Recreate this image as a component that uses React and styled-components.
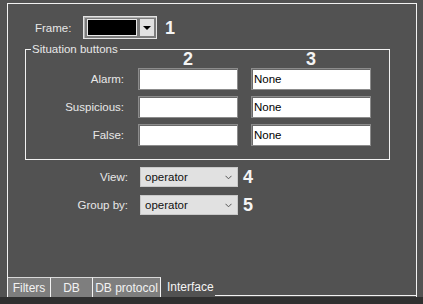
import React from "react";
import styled, { createGlobalStyle } from "styled-components";

const Global = createGlobalStyle`
  html, body { margin: 0; padding: 0; background: #525252; }
  body { font-family: "Liberation Sans Narrow", "Liberation Sans", Arial, sans-serif; }
`;

const Screen = styled.div`
  width: 423px;
  height: 304px;
  display: flex;
  flex-direction: column;
  background: #525252;
  overflow: hidden;
`;

const Main = styled.div`
  flex: 1;
  display: flex;
  padding: 3px 6px 0 7px;
`;

const BottomStrip = styled.div`
  height: 7px;
  background: #2f2f2f;
`;

const Panel = styled.div`
  flex: 1;
  display: flex;
  flex-direction: column;
  border: 1px solid #f2f2f2;
  border-bottom: none;
`;

const Content = styled.div`
  flex: 1;
  display: flex;
  flex-direction: column;
`;

const Label = styled.span`
  font-size: 11.5px;
  color: #e8e8e8;
  text-align: ${(p) => (p.$align || "right")};
  width: ${(p) => (p.$w ? p.$w + "px" : "auto")};
  padding-right: ${(p) => (p.$pr || 0)}px;
  box-sizing: border-box;
  white-space: nowrap;
`;

const Num = styled.span`
  font-family: "Liberation Sans", Arial, sans-serif;
  font-weight: bold;
  font-size: 18px;
  line-height: 18px;
  color: #f4f4f4;
  margin-left: ${(p) => (p.$ml || 0)}px;
`;

const FrameRow = styled.div`
  display: flex;
  align-items: center;
  height: 23px;
  margin-top: 12px;
  padding-left: 27px;
`;

const Combo = styled.div`
  width: 74px;
  height: 23px;
  box-sizing: border-box;
  display: flex;
  align-items: center;
  gap: 3px;
  padding: 2px 2px 2px 3px;
  background: #7c7c7c;
  border: 1px solid #e4e4e4;
  box-shadow: inset 1px 1px 0 #b0b0b0;
`;

const Swatch = styled.div`
  width: 51px;
  height: 17px;
  box-sizing: border-box;
  background: #000;
  border: 1px solid #e8e8e8;
`;

const DropBtn = styled.div`
  width: 14px;
  height: 17px;
  background: #e2e2e2;
  display: flex;
  align-items: center;
  justify-content: center;
  &::after {
    content: "";
    border-left: 4px solid transparent;
    border-right: 4px solid transparent;
    border-top: 4px solid #000;
  }
`;

const Group = styled.fieldset`
  margin: 3px 0 0 17px;
  padding: 0 0 13px 0;
  width: 365px;
  box-sizing: border-box;
  border: 1px solid #f2f2f2;
  min-inline-size: auto;
`;

const Legend = styled.legend`
  font-size: 11.5px;
  color: #e8e8e8;
  padding: 0 2px 0 1px;
  margin-left: 5px;
  line-height: 14px;
`;

const Grid = styled.div`
  display: grid;
  grid-template-columns: 99px 100px 120px;
  grid-template-rows: 6px;
  grid-auto-rows: 22px;
  column-gap: 13px;
  row-gap: 6px;
  align-items: center;
`;

const ColHead = styled.div`
  display: flex;
  justify-content: center;
  align-items: center;
  height: 6px;
`;

const Field = styled.div`
  height: 22px;
  box-sizing: border-box;
  background: #fff;
  border: 1px solid #8c8c8c;
  box-shadow: inset 1px 1px 0 #6a6a6a;
  font-size: 11.5px;
  color: #000;
  display: flex;
  align-items: center;
  padding-left: 2px;
`;

const SelectRow = styled.div`
  display: flex;
  align-items: center;
  height: 20px;
  margin-top: ${(p) => p.$mt}px;
`;

const Select = styled.div`
  width: 98px;
  height: 20px;
  box-sizing: border-box;
  margin-left: 12px;
  background: #e1e1e1;
  border: 1px solid #c9c9c9;
  display: flex;
  align-items: center;
  justify-content: space-between;
  padding: 0 5px 0 4px;
  font-size: 11.5px;
  color: #111;
`;

const Chevron = () => (
  <svg width="7" height="5" viewBox="0 0 7 5">
    <path d="M0.5 0.8 L3.5 3.8 L6.5 0.8" fill="none" stroke="#555" strokeWidth="1" />
  </svg>
);

const Tabs = styled.div`
  display: flex;
  height: 20px;
`;

const Tab = styled.div`
  width: ${(p) => p.$w}px;
  box-sizing: border-box;
  background: #7e7e7e;
  border-top: 1px solid #d8d8d8;
  border-right: 1px solid #f2f2f2;
  color: #f2f2f2;
  font-size: 12px;
  display: flex;
  align-items: center;
  justify-content: center;
`;

const ActiveTab = styled.div`
  width: 54px;
  box-sizing: border-box;
  padding-left: 6px;
  color: #f4f4f4;
  font-size: 12px;
  display: flex;
  align-items: center;
`;

const TabFiller = styled.div`
  flex: 1;
  border-bottom: 1px solid #f2f2f2;
  margin-bottom: 1px;
`;

export default function App() {
  return (
    <>
      <Global />
      <Screen>
        <Main>
          <Panel>
            <Content>
              <FrameRow>
                <Label $align="left" $w={48}>Frame:</Label>
                <Combo>
                  <Swatch />
                  <DropBtn />
                </Combo>
                <Num $ml={8}>1</Num>
              </FrameRow>
              <Group>
                <Legend>Situation buttons</Legend>
                <Grid>
                  <span />
                  <ColHead><Num>2</Num></ColHead>
                  <ColHead><Num>3</Num></ColHead>
                  <Label $pr={1}>Alarm:</Label>
                  <Field />
                  <Field>None</Field>
                  <Label $pr={1}>Suspicious:</Label>
                  <Field />
                  <Field>None</Field>
                  <Label $pr={1}>False:</Label>
                  <Field />
                  <Field>None</Field>
                </Grid>
              </Group>
              <SelectRow $mt={7}>
                <Label $w={120}>View:</Label>
                <Select>operator<Chevron /></Select>
                <Num $ml={5}>4</Num>
              </SelectRow>
              <SelectRow $mt={8}>
                <Label $w={120}>Group by:</Label>
                <Select>operator<Chevron /></Select>
                <Num $ml={5}>5</Num>
              </SelectRow>
            </Content>
            <Tabs>
              <Tab $w={43}>Filters</Tab>
              <Tab $w={42}>DB</Tab>
              <Tab $w={68}>DB protocol</Tab>
              <ActiveTab>Interface</ActiveTab>
              <TabFiller />
            </Tabs>
          </Panel>
        </Main>
        <BottomStrip />
      </Screen>
    </>
  );
}
